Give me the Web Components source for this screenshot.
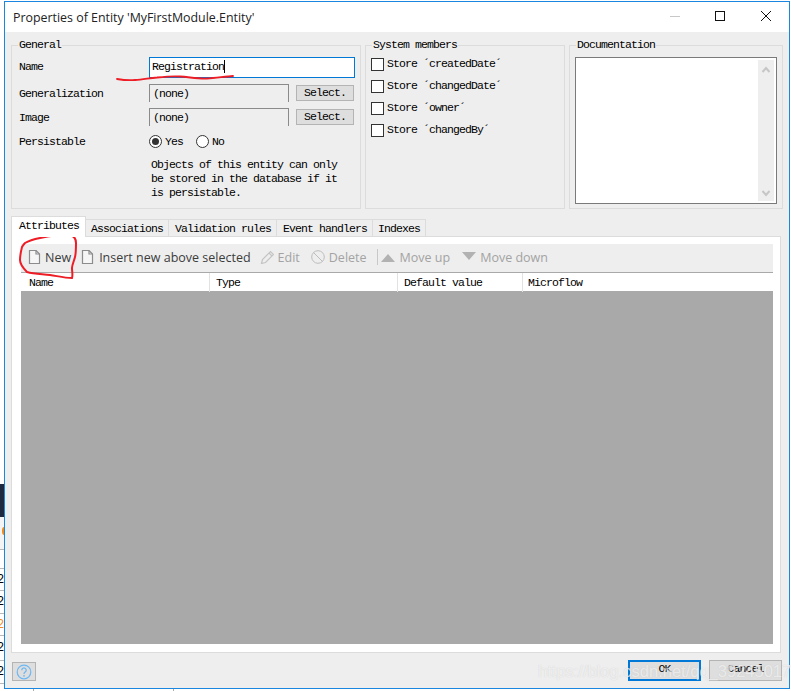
<!DOCTYPE html>
<html>
<head>
<meta charset="utf-8">
<style>
  html, body { margin: 0; height: 691px; overflow: hidden; background: #fff; }
  body { position: relative; font: 11.5px "Liberation Mono", monospace; letter-spacing: -0.9px; color: #000; }
</style>
</head>
<body>
<entity-dialog></entity-dialog>
<script>
class GroupBox extends HTMLElement {
  constructor() {
    super();
    this.shadowDOM = this.attachShadow({mode: "open"});
    this.shadowDOM.innerHTML = `
      <style>
        :host { display: block; position: relative; border: 1px solid #dcdcdc; box-sizing: border-box; }
        .legend { position: absolute; top: -7px; left: 6px; padding: 0 1px; background: #eeeeee; line-height: 12px; }
      </style>
      <div class="legend">${this.getAttribute("label")}</div>
      <slot></slot>`;
  }
}
customElements.define("group-box", GroupBox);

class PickField extends HTMLElement {
  constructor() {
    super();
    this.shadowDOM = this.attachShadow({mode: "open"});
    this.shadowDOM.innerHTML = `
      <style>
        :host { display: flex; height: 18px; align-items: flex-start; }
        .label { width: 130px; line-height: 20px; }
        .value { width: 140px; height: 18px; box-sizing: border-box; border: 1px solid #8a8a8a; border-bottom: 0; padding-left: 3px; line-height: 18px; }
        button { margin: 1px 0 0 7px; width: 58px; height: 16px; padding: 0 0 1px; border: 1px solid #b4b4b4; background: #dedede; font: inherit; letter-spacing: inherit; color: inherit; line-height: 12px; }
      </style>
      <div class="label">${this.getAttribute("label")}</div>
      <div class="value">(none)</div>
      <button>Select.</button>`;
  }
}
customElements.define("pick-field", PickField);

class StoreCheck extends HTMLElement {
  constructor() {
    super();
    this.shadowDOM = this.attachShadow({mode: "open"});
    this.shadowDOM.innerHTML = `
      <style>
        :host { display: flex; align-items: flex-start; height: 22px; }
        i { width: 13px; height: 13px; box-sizing: border-box; border: 1px solid #333; background: #fff; margin-right: 3px; }
        span { line-height: 11px; white-space: pre; }
      </style>
      <i></i><span><slot></slot></span>`;
  }
}
customElements.define("store-check", StoreCheck);

class ToolButton extends HTMLElement {
  constructor() {
    super();
    this.shadowDOM = this.attachShadow({mode: "open"});
    const icons = {
      page: `<path d="M1.5 .5h6.500l3.500 3.500v9.500h-10z" fill="#f6f6f6" stroke="#8c8c8c" stroke-width="1.200"/><path d="M8 .5v3.500h3.500" fill="none" stroke="#8c8c8c" stroke-width="1.200"/>`,
      pencil: `<path d="M1.500 13.500l1-4 8-8 3 3-8 8z M9 3l3 3" fill="none" stroke="#c4c4c4" stroke-width="1.200"/>`,
      ban: `<circle cx="7" cy="7" r="6.300" fill="none" stroke="#bdbdbd"/><path d="M2.600 2.600l8.800 8.800" stroke="#bdbdbd"/>`,
      up: `<path d="M0 12L7 4l7 8z" fill="#b2b2b2"/>`,
      down: `<path d="M0 2l7 8 7-8z" fill="#b2b2b2"/>`
    };
    const icon = this.getAttribute("icon");
    this.shadowDOM.innerHTML = `
      <style>
        :host { display: flex; align-items: center; gap: var(--gap, 4px); font: 12.5px "Open Sans", "Noto Sans", sans-serif; letter-spacing: 0; white-space: nowrap; color: #a3a3a3; }
        :host([on]) { color: #3c3c3c; }
        svg { width: 14px; height: 14px; flex: none; }
      </style>
      <svg viewBox="0 0 14 14">${icons[icon]}</svg><slot></slot>`;
  }
}
customElements.define("tool-button", ToolButton);

class BackStrip extends HTMLElement {
  constructor() {
    super();
    this.shadowDOM = this.attachShadow({mode: "open"});
    this.shadowDOM.innerHTML = `
      <style>
        :host { display: flex; flex-direction: column; position: absolute; left: 0; top: 484px; width: 4px; height: 207px; overflow: hidden; }
        .dark { height: 33px; background: #1d2a3f; flex: none; }
        .blob { height: 32px; flex: none; background: #f4f4f4; border-bottom: 1px solid #b8b8b8; position: relative; }
        .blob::after { content: ""; position: absolute; left: 2px; top: 10px; width: 4px; height: 8px; border-radius: 50%; background: #ee8c1e; }
        .line { flex: none; box-sizing: border-box; border-bottom: 1px solid #b8b8b8; display: flex; align-items: center; }
        .line span { margin-left: -3px; font-size: 12px; letter-spacing: 0; }
      </style>
      <div class="dark"></div>
      <div class="blob"></div>
      <div class="line" style="height:19px"></div>
      <div class="line" style="height:22px"><span>2</span></div>
      <div class="line" style="height:23px"><span>2</span></div>
      <div class="line" style="height:22px"><span style="color:#ee8c1e">2</span></div>
      <div class="line" style="height:25px"><span>2</span></div>
      <div class="line" style="height:23px"><span>2</span></div>`;
  }
}
customElements.define("back-strip", BackStrip);

class EntityDialog extends HTMLElement {
  constructor() {
    super();
    this.shadowDOM = this.attachShadow({mode: "open"});
    this.shadowDOM.innerHTML = `
      <style>
        * { box-sizing: border-box; }
        :host { display: block; position: relative; width: 791px; height: 691px; overflow: hidden; }
        .tick { position: absolute; top: 689px; width: 1px; height: 2px; background: #aaa; }
        .dialog { position: absolute; left: 4px; top: 1px; width: 786px; height: 688px; border: 1px solid #1a86e0; background: #eeeeee; display: flex; flex-direction: column; }
        .title { height: 30px; background: #fff; display: flex; align-items: center; padding-left: 8px; font: 12.4px "Open Sans", sans-serif; letter-spacing: 0; color: #222; flex: none; }
        .title span { flex: 1; }
        .title svg { width: 46px; height: 30px; flex: none; }
        .top { display: flex; gap: 4px; padding: 13px 6px 0 6px; height: 176px; flex: none; }
        .general { width: 350px; height: 164px; padding: 11px 5px 11px 7px; }
        .row { display: flex; height: 27px; align-items: flex-start; }
        .row .label { width: 130px; line-height: 20px; flex: none; }
        .name-input { width: 206px; height: 21px; flex: none; border: 1px solid #0078d7; background: #fff; padding-left: 2px; line-height: 18px; }
        .name-input b { font-weight: normal; border-right: 1px solid #000; }
        pick-field { margin-bottom: 6px; }
        .radio { display: flex; align-items: center; gap: 3px; margin-right: 13px; height: 18px; }
        .radio i { width: 13px; height: 13px; border-radius: 50%; border: 1px solid #333; background: #fff; display: block; position: relative; }
        .radio i.on::after { content: ""; position: absolute; left: 2px; top: 2px; width: 7px; height: 7px; border-radius: 50%; background: #333; }
        .persist { height: 22px; }
        .note { margin: 4px 0 0 132px; line-height: 14px; }
        .system { width: 200px; height: 164px; padding: 12px 5px; }
        .docs { width: 214px; height: 164px; padding: 11px 5px; }
        .docbox { height: 147px; width: 202px; border: 1px solid #7a7a7a; background: #fff; position: relative; }
        .scroll { position: absolute; right: 2px; top: 2px; bottom: 2px; width: 16px; background: #eeeeee; }
        .scroll svg { position: absolute; left: 3px; width: 10px; height: 8px; }
        .tabs { display: flex; height: 19px; margin: 10px 0 0 6px; align-items: flex-end; flex: none; position: relative; z-index: 1; }
        .tab { height: 18px; border: 1px solid #dcdcdc; border-left: 0; border-bottom: 0; padding: 0 5px; line-height: 17px; }
        .tab.wide { padding-left: 6px; }
        .tab.active { height: 21px; width: 75px; background: #fff; border-left: 1px solid #dcdcdc; line-height: 18px; padding: 0 7px; }
        .panel { margin: -1px 8px 0 6px; height: 417px; border: 1px solid #dcdcdc; background: #fff; padding: 7px 7px 8px 9px; display: flex; flex-direction: column; flex: none; }
        .toolbar { height: 28px; background: #eeeeee; display: flex; align-items: center; padding: 0 0 2px 7px; flex: none; }
        .sep { width: 1px; height: 16px; background: #c8c8c8; margin: 0 3px 0 10px; }
        .grid { flex: 1; display: flex; flex-direction: column; background: #a9a9a9; border-top: 1px solid #a9a9a9; }
        .head { height: 18px; background: #fff; display: grid; grid-template-columns: 189px 188px 125px 1fr; }
        .head div { padding-left: 6px; line-height: 19px; border-right: 1px solid #e2e2e2; }
        .head div:first-child { padding-left: 8px; }
        .head div:last-child { padding-left: 5px; border-right: 0; }
        .foot { flex: 1; display: flex; align-items: flex-start; padding: 7px 7px 0 7px; }
        .help { width: 24px; height: 19px; margin-top: 2px; border: 1px solid #b4b4b4; background: #dedede; display: flex; align-items: center; justify-content: center; }
        .foot .gap { flex: 1; }
        .foot button { width: 73px; height: 21px; padding: 0 0 4px; background: #dedede; border: 1px solid #b4b4b4; font: inherit; letter-spacing: inherit; color: inherit; }
        .foot .ok { border: 2px solid #0078d7; margin-right: 8px; padding-bottom: 5px; }
        .mark { position: absolute; left: 0; top: 0; width: 791px; height: 691px; pointer-events: none; }
        .wm { position: absolute; left: 538px; top: 662px; font: 16.5px "Liberation Sans", sans-serif; letter-spacing: 0; color: rgba(255,255,255,.65); white-space: nowrap; pointer-events: none; text-shadow: 0 0 1px rgba(160,160,160,.45); }
      </style>
      <back-strip></back-strip>
      <div class="tick" style="left:33px"></div>
      <div class="tick" style="left:173px"></div>
      <div class="dialog">
        <div class="title">
          <span>Properties of Entity 'MyFirstModule.Entity'</span>
          <svg viewBox="0 0 46 30"><path d="M19 14.500h10" stroke="#c8c8c8"/></svg>
          <svg viewBox="0 0 46 30"><rect x="18.500" y="9.500" width="9" height="9" fill="none" stroke="#111"/></svg>
          <svg viewBox="0 0 46 30"><path d="M18 9l10 10M28 9L18 19" stroke="#111" fill="none"/></svg>
        </div>
        <div class="top">
          <group-box class="general" label="General">
            <div class="row"><div class="label">Name</div><div class="name-input"><b>Registration</b></div></div>
            <pick-field label="Generalization"></pick-field>
            <pick-field label="Image"></pick-field>
            <div class="row persist">
              <div class="label">Persistable</div>
              <label class="radio"><i class="on"></i>Yes</label>
              <label class="radio"><i></i>No</label>
            </div>
            <div class="note">Objects of this entity can only<br>be stored in the database if it<br>is persistable.</div>
          </group-box>
          <group-box class="system" label="System members">
            <store-check>Store ´createdDate´</store-check>
            <store-check>Store ´changedDate´</store-check>
            <store-check>Store ´owner´</store-check>
            <store-check>Store ´changedBy´</store-check>
          </group-box>
          <group-box class="docs" label="Documentation">
            <div class="docbox">
              <div class="scroll">
                <svg style="top:6px" viewBox="0 0 10 8"><path d="M1.500 6L5 2l3.500 4" fill="none" stroke="#c6c6c6" stroke-width="2"/></svg>
                <svg style="bottom:4px" viewBox="0 0 10 8"><path d="M1.500 2L5 6l3.500-4" fill="none" stroke="#c6c6c6" stroke-width="2"/></svg>
              </div>
            </div>
          </group-box>
        </div>
        <div class="tabs">
          <div class="tab active">Attributes</div>
          <div class="tab">Associations</div>
          <div class="tab wide">Validation rules</div>
          <div class="tab wide">Event handlers</div>
          <div class="tab">Indexes</div>
        </div>
        <div class="panel">
          <div class="toolbar">
            <tool-button icon="page" on style="--gap:3px;margin-right:10px">New</tool-button>
            <tool-button icon="page" on style="margin-right:9px">Insert new above selected</tool-button>
            <tool-button icon="pencil" style="margin-right:11px">Edit</tool-button>
            <tool-button icon="ban">Delete</tool-button>
            <div class="sep"></div>
            <tool-button icon="up" style="--gap:5px;margin-right:12px">Move up</tool-button>
            <tool-button icon="down">Move down</tool-button>
          </div>
          <div class="grid">
            <div class="head"><div>Name</div><div>Type</div><div>Default value</div><div>Microflow</div></div>
          </div>
        </div>
        <div class="foot">
          <div class="help">
            <svg width="16" height="16" viewBox="0 0 16 16"><circle cx="8" cy="8" r="6.800" fill="none" stroke="#6db8f2" stroke-width="1.200"/><path d="M5.800 6.200a2.200 2.200 0 1 1 3.400 1.800c-.8.500-1.200 1-1.200 1.900" fill="none" stroke="#6db8f2" stroke-width="1.300"/><circle cx="8" cy="11.800" r=".9" fill="#6db8f2"/></svg>
          </div>
          <div class="gap"></div>
          <button class="ok">OK</button>
          <button>Cancel</button>
        </div>
      </div>
      <svg class="mark" viewBox="0 0 791 691">
        <path d="M117 79c6 1 12 1.500 18 1 8-.5 15-2 22-2.500 8-.8 15-1.500 23-1 9 .5 18 2.500 27 2 9-.5 18-2 26-2.500" fill="none" stroke="#ee1c25" stroke-width="1.800" stroke-linecap="round"/>
        <path d="M25 243c5-3 10-4 15-5 10-2 21-4 30-3 4 1 6 4 6 8 0 5 0 10-1 14-1 4-3 8-3 11 0 4 1 7 0 10-7 0-15-2-22-3-8-1-16-1-23-3-4-4-7-8-7-12 0-5 1-9 2-13 1-2 2-3 3-4" fill="none" stroke="#ee1c25" stroke-width="2" stroke-linecap="round"/>
      </svg>
      <div class="wm">https://blog.csdn.net/qq_39245017</div>`;
  }
}
customElements.define("entity-dialog", EntityDialog);
</script>
</body>
</html>
